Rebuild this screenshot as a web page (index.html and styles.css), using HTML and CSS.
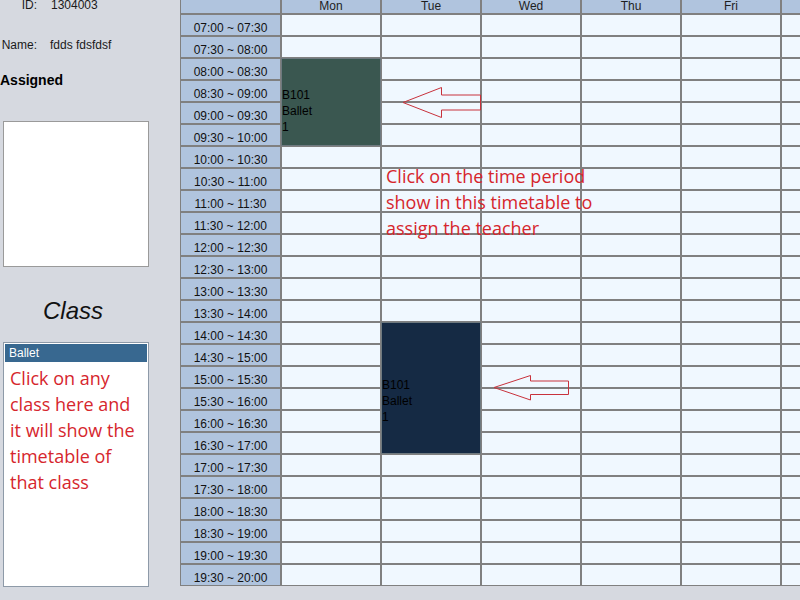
FILE: index.html
```html
<!DOCTYPE html>
<html>
<head>
<meta charset="utf-8">
<title>Timetable</title>
<link rel="stylesheet" href="styles.css">
</head>
<body>
<div class="page">
  <aside class="side">
    <div class="info">
      <span class="lbl">ID:</span><span class="val">1304003</span>
    </div>
    <div class="info info-name">
      <span class="lbl">Name:</span><span class="val">fdds fdsfdsf</span>
    </div>
    <div class="assigned">Assigned</div>
    <div class="assigned-box"></div>
    <div class="class-title">Class</div>
    <div class="class-list">
      <div class="class-opt">Ballet</div>
      <div class="note note-left">Click on any class here and it will show the timetable of that class</div>
    </div>
  </aside>

  <main class="tt">
    <div class="h"></div><div class="h">Mon</div><div class="h">Tue</div><div class="h">Wed</div><div class="h">Thu</div><div class="h">Fri</div><div class="h">Sat</div>

    <div class="blk blk-mon"><span>B101</span><span>Ballet</span><span>1</span></div>
    <div class="blk blk-tue"><span>B101</span><span>Ballet</span><span>1</span></div>

    <div class="t">07:00 ~ 07:30</div><div class="c"></div><div class="c"></div><div class="c"></div><div class="c"></div><div class="c"></div><div class="c"></div>
    <div class="t">07:30 ~ 08:00</div><div class="c"></div><div class="c"></div><div class="c"></div><div class="c"></div><div class="c"></div><div class="c"></div>
    <div class="t">08:00 ~ 08:30</div><div class="c"></div><div class="c"></div><div class="c"></div><div class="c"></div><div class="c"></div>
    <div class="t">08:30 ~ 09:00</div><div class="c"></div><div class="c"></div><div class="c"></div><div class="c"></div><div class="c"></div>
    <div class="t">09:00 ~ 09:30</div><div class="c"></div><div class="c"></div><div class="c"></div><div class="c"></div><div class="c"></div>
    <div class="t">09:30 ~ 10:00</div><div class="c"></div><div class="c"></div><div class="c"></div><div class="c"></div><div class="c"></div>
    <div class="t">10:00 ~ 10:30</div><div class="c"></div><div class="c"></div><div class="c"></div><div class="c"></div><div class="c"></div><div class="c"></div>
    <div class="t">10:30 ~ 11:00</div><div class="c"></div><div class="c"></div><div class="c"></div><div class="c"></div><div class="c"></div><div class="c"></div>
    <div class="t">11:00 ~ 11:30</div><div class="c"></div><div class="c"></div><div class="c"></div><div class="c"></div><div class="c"></div><div class="c"></div>
    <div class="t">11:30 ~ 12:00</div><div class="c"></div><div class="c"></div><div class="c"></div><div class="c"></div><div class="c"></div><div class="c"></div>
    <div class="t">12:00 ~ 12:30</div><div class="c"></div><div class="c"></div><div class="c"></div><div class="c"></div><div class="c"></div><div class="c"></div>
    <div class="t">12:30 ~ 13:00</div><div class="c"></div><div class="c"></div><div class="c"></div><div class="c"></div><div class="c"></div><div class="c"></div>
    <div class="t">13:00 ~ 13:30</div><div class="c"></div><div class="c"></div><div class="c"></div><div class="c"></div><div class="c"></div><div class="c"></div>
    <div class="t">13:30 ~ 14:00</div><div class="c"></div><div class="c"></div><div class="c"></div><div class="c"></div><div class="c"></div><div class="c"></div>
    <div class="t">14:00 ~ 14:30</div><div class="c"></div><div class="c"></div><div class="c"></div><div class="c"></div><div class="c"></div>
    <div class="t">14:30 ~ 15:00</div><div class="c"></div><div class="c"></div><div class="c"></div><div class="c"></div><div class="c"></div>
    <div class="t">15:00 ~ 15:30</div><div class="c"></div><div class="c"></div><div class="c"></div><div class="c"></div><div class="c"></div>
    <div class="t">15:30 ~ 16:00</div><div class="c"></div><div class="c"></div><div class="c"></div><div class="c"></div><div class="c"></div>
    <div class="t">16:00 ~ 16:30</div><div class="c"></div><div class="c"></div><div class="c"></div><div class="c"></div><div class="c"></div>
    <div class="t">16:30 ~ 17:00</div><div class="c"></div><div class="c"></div><div class="c"></div><div class="c"></div><div class="c"></div>
    <div class="t">17:00 ~ 17:30</div><div class="c"></div><div class="c"></div><div class="c"></div><div class="c"></div><div class="c"></div><div class="c"></div>
    <div class="t">17:30 ~ 18:00</div><div class="c"></div><div class="c"></div><div class="c"></div><div class="c"></div><div class="c"></div><div class="c"></div>
    <div class="t">18:00 ~ 18:30</div><div class="c"></div><div class="c"></div><div class="c"></div><div class="c"></div><div class="c"></div><div class="c"></div>
    <div class="t">18:30 ~ 19:00</div><div class="c"></div><div class="c"></div><div class="c"></div><div class="c"></div><div class="c"></div><div class="c"></div>
    <div class="t">19:00 ~ 19:30</div><div class="c"></div><div class="c"></div><div class="c"></div><div class="c"></div><div class="c"></div><div class="c"></div>
    <div class="t">19:30 ~ 20:00</div><div class="c"></div><div class="c"></div><div class="c"></div><div class="c"></div><div class="c"></div><div class="c"></div>
  </main>

  <div class="note note-tt">Click on the time period show in this timetable to assign the teacher</div>

  <svg class="arrows" width="800" height="600" viewBox="0 0 800 600">
    <polygon points="403,102.5 441.5,87.5 441.5,95 480.5,95 480.5,110 441.5,110 441.5,117.5" />
    <polygon points="494,387.5 530.5,375.5 530.5,381 568.5,381 568.5,394.5 530.5,394.5 530.5,400" />
  </svg>
</div>
</body>
</html>
```

FILE: styles.css
```css
html, body {
  margin: 0;
  padding: 0;
  width: 800px;
  height: 600px;
  overflow: hidden;
  background: #d6d9e0;
  font-family: "Liberation Sans", Arial, sans-serif;
  font-size: 12px;
  color: #1a1a1a;
}

.page {
  position: relative;
  display: flex;
  align-items: flex-start;
  width: 800px;
  height: 600px;
}

.side {
  flex: 0 0 180px;
  width: 180px;
  display: flex;
  flex-direction: column;
}

.info {
  display: grid;
  grid-template-columns: 37px auto;
  column-gap: 14px;
  line-height: 12px;
  margin-top: -1px;
}

.info-name {
  margin-top: 28px;
  column-gap: 13px;
}

.lbl {
  text-align: right;
}

.assigned {
  margin-top: 21px;
  font-size: 14px;
  font-weight: bold;
  line-height: 16px;
  color: #000;
}

.assigned-box {
  margin: 33px 0 0 3px;
  width: 144px;
  height: 144px;
  background: #fff;
  border: 1px solid #9a9a9a;
}

.class-title {
  margin-top: 30px;
  width: 146px;
  text-align: center;
  font-size: 24px;
  font-style: italic;
  line-height: 28px;
  color: #111;
}

.class-list {
  margin: 17px 0 0 3px;
  width: 142px;
  height: 241px;
  padding: 1px;
  background: #fff;
  border: 1px solid #8e9aa8;
}

.class-opt {
  height: 18px;
  line-height: 18px;
  padding-left: 4px;
  background: #386890;
  color: #fff;
  font-size: 12px;
}

.note {
  font-family: "Open Sans", Lato, sans-serif;
  font-size: 18px;
  line-height: 26px;
  color: #d6262d;
}

.note-left {
  margin-top: 3px;
  padding: 0 6px 0 5px;
}

.note-tt {
  position: absolute;
  left: 386px;
  top: 163px;
  width: 215px;
}

.tt {
  display: grid;
  grid-template-columns: 99px repeat(6, 98px);
  grid-template-rows: 13px repeat(26, 20px);
  gap: 2px;
  padding: 0 0 1px 1px;
  background: #808080;
  flex: 0 0 auto;
}

.h {
  background: #b0c4de;
  text-align: center;
  line-height: 13px;
  color: #1e1e1e;
}

.t {
  background: #b0c4de;
  display: flex;
  align-items: flex-end;
  justify-content: center;
  line-height: 14px;
  color: #111;
}

.c {
  background: #f0f8ff;
}

.blk {
  display: flex;
  flex-direction: column;
  justify-content: center;
  line-height: 16px;
  color: #000;
  margin: -1px;
  border: 1px solid #6f7a80;
}

.blk-mon {
  grid-column: 2;
  grid-row: 4 / span 4;
  background: #3a5750;
  padding-top: 18px;
}

.blk-tue {
  grid-column: 3;
  grid-row: 16 / span 6;
  background: #152a44;
  padding-top: 26px;
}

.arrows {
  position: absolute;
  left: 0;
  top: 0;
  pointer-events: none;
}

.arrows polygon {
  fill: none;
  stroke: #c8323c;
  stroke-width: 1;
}
```
